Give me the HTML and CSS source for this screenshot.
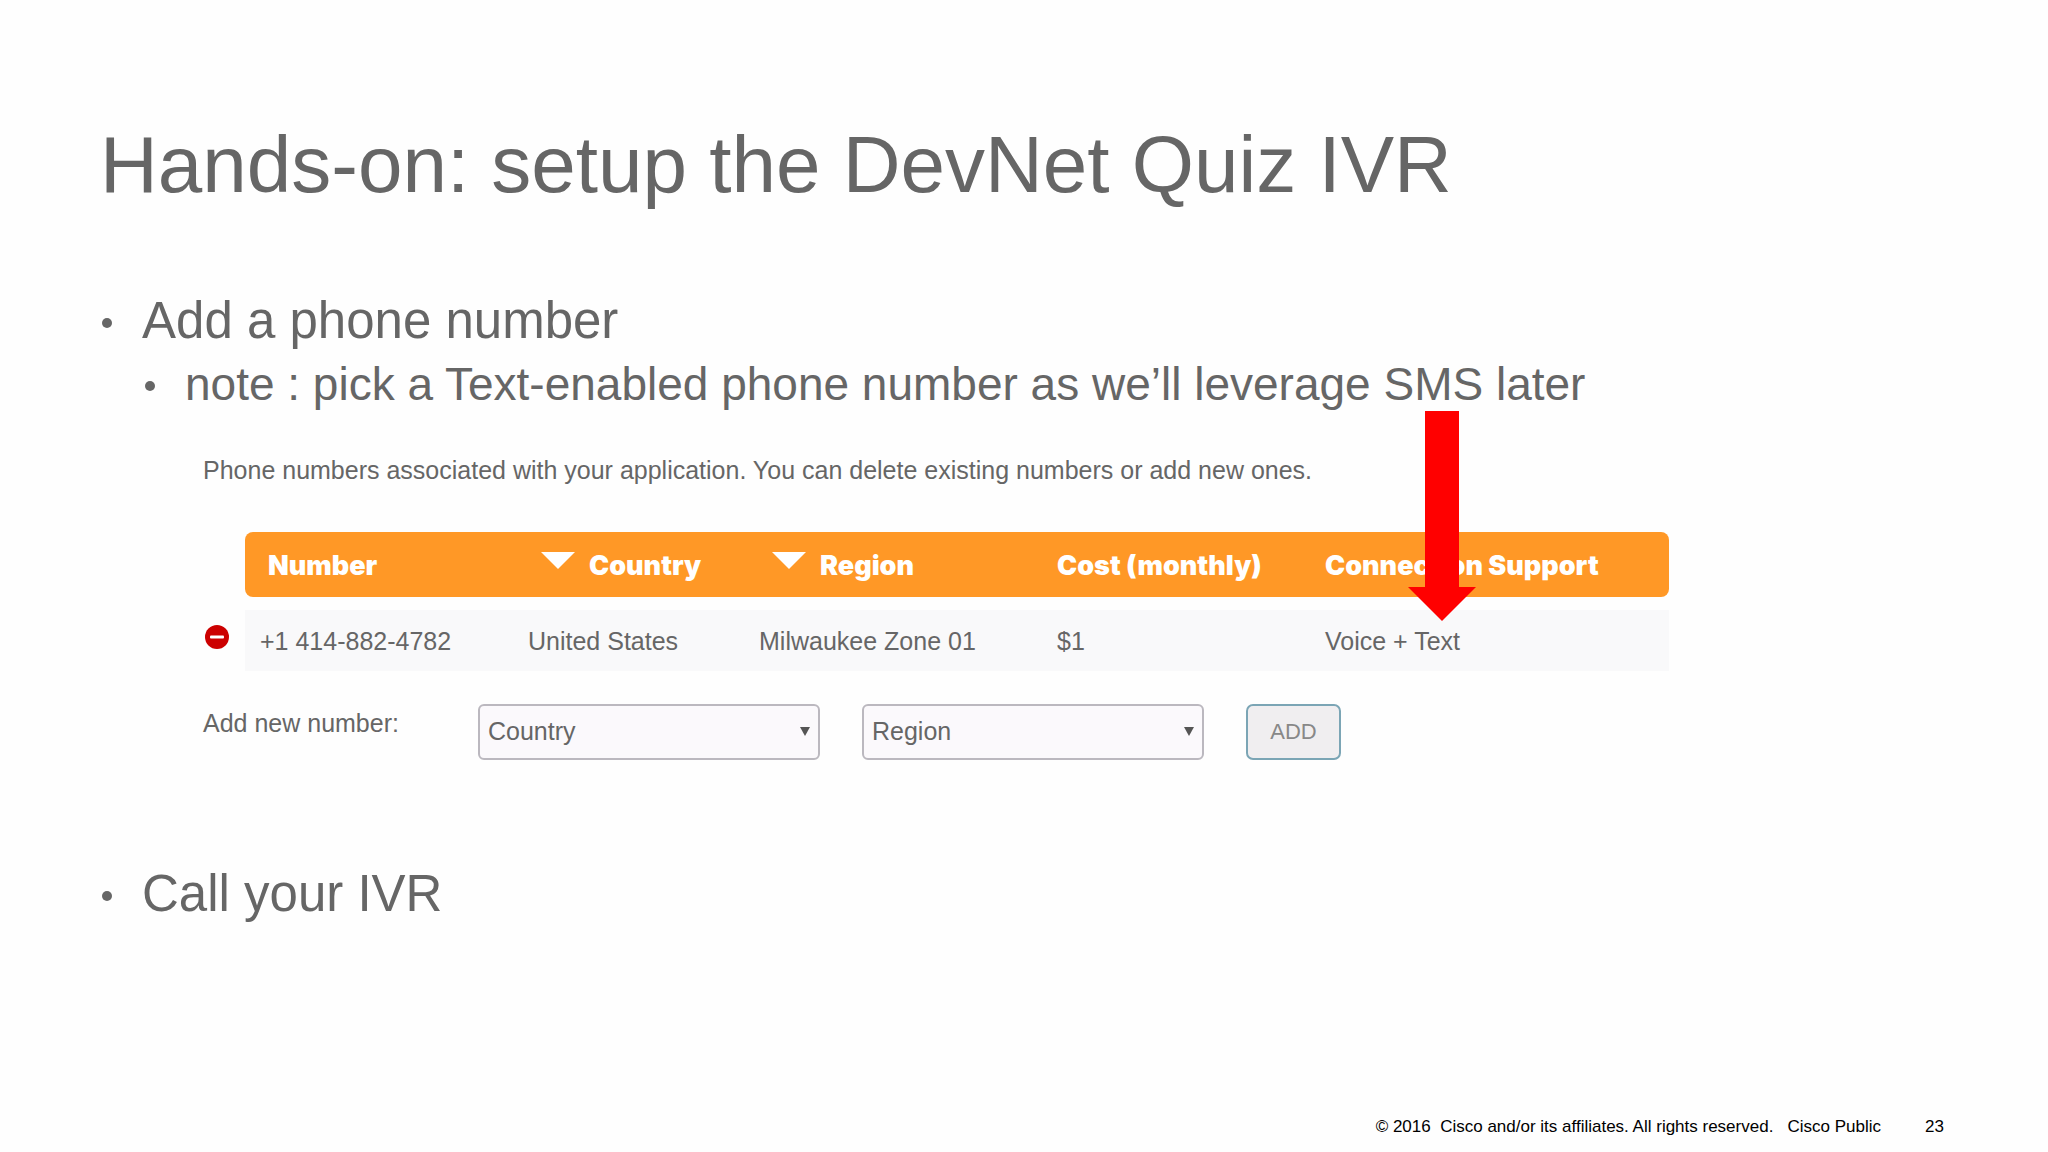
FILE: index.html
```
<!DOCTYPE html>
<html lang="en">
    <head>
        <meta charset="UTF-8">
        <title>Hands-on: setup the DevNet Quiz IVR</title>
        <link rel="stylesheet" href="styles.css">
    </head>
    <body>
    <div class="slide">
        <h1>Hands-on: setup the DevNet Quiz IVR</h1>
        <ul class="steps">
            <li>
                <p class="step">Add a phone number</p>
                <ul class="notes">
                    <li><p class="note">note : pick a Text-enabled phone number as we’ll leverage SMS later</p></li>
                </ul>
                <div class="app">
                    <p>Phone numbers associated with your application. You can delete existing numbers or add new ones.</p>
                    <table class="numbers">
                        <thead>
                            <tr>
                                <td class="del"></td>
                                <th class="number">Number</th>
                                <th class="country sort"><span></span>Country</th>
                                <th class="region sort"><span></span>Region</th>
                                <th class="cost">Cost (monthly)</th>
                                <th class="support">Connection Support
                                    <svg class="pointer" width="68" height="210" viewBox="0 0 68 210">
                                        <path d="M17 0H51V176H68L34 210L0 176H17Z" fill="#f00"/>
                                    </svg>
                                </th>
                            </tr>
                        </thead>
                        <tbody>
                            <tr>
                                <td class="del">
                                    <button class="remove" type="button" aria-label="Delete number">
                                        <svg width="26" height="26" viewBox="0 0 26 26">
                                            <circle cx="14" cy="13" r="12" fill="#c00"/>
                                            <rect x="7" y="11.5" width="14" height="3" rx="1" fill="#fff"/>
                                        </svg>
                                    </button>
                                </td>
                                <td>+1 414-882-4782</td>
                                <td>United States</td>
                                <td>Milwaukee Zone 01</td>
                                <td>$1</td>
                                <td>Voice + Text</td>
                            </tr>
                        </tbody>
                    </table>
                    <form class="add">
                        <label for="country">Add new number:</label>
                        <div class="select">
                            <select id="country"><option>Country</option></select>
                        </div>
                        <div class="select">
                            <select id="region" aria-label="Region"><option>Region</option></select>
                        </div>
                        <button type="button">ADD</button>
                    </form>
                </div>
            </li>
            <li><p class="step">Call your IVR</p></li>
        </ul>
        <footer>
            <span class="copy">© 2016  Cisco and/or its affiliates. All rights reserved.   Cisco Public</span>
            <span>23</span>
        </footer>
    </div>
    </body>
</html>
```

FILE: styles.css
```
*{
    margin:0;
    padding:0;
    box-sizing:border-box;
}
body{
    font-family:"Liberation Sans", Arial, sans-serif;
    color:#666;
    background:#fefefe;
}
ul{
    list-style:none;
}
.slide{
    display:flex;
    flex-direction:column;
    min-height:100vh;
    padding:117px 100px 13px;
}
h1{
    font-size:80px;
    line-height:96px;
    font-weight:normal;
    margin-bottom:76px;
}
.step,.note{
    display:flex;
    align-items:center;
}
.step{
    font-size:51px;
    line-height:64px;
}
.note{
    font-size:46px;
    line-height:62px;
}
.step:before,.note:before{
    content:"";
    flex:none;
    width:10px;
    height:10px;
    margin:4px 30px 0 2px;
    border-radius:50%;
    background:#666;
}
.notes{
    padding-left:43px;
}
/* phone numbers panel */
.app{
    max-width:1466px;
    margin:39px 0 102px 103px;
    font-size:25px;
    line-height:32px;
}
.numbers{
    width:100%;
    margin-top:33px;
    table-layout:fixed;
    border-collapse:separate;
    border-spacing:0 13px;
}
.numbers th,.numbers td{
    padding-left:15px;
    text-align:left;
}
.numbers th{
    position:relative;
    height:65px;
    padding-top:2px;
    font-family:Inter, "Liberation Sans", sans-serif;
    font-size:27px;
    font-weight:900;
    color:#fff;
    background:#ff9826;
    white-space:nowrap;
}
.numbers td{
    background:#f9f9fa;
}
.numbers tbody td{
    height:61px;
}
.numbers .del{
    width:42px;
    padding-left:0;
    background:none;
}
.numbers .number{
    width:268px;
    padding-left:23px;
    border-radius:8px 0 0 8px;
}
.numbers .country{
    width:231px;
}
.numbers .region{
    width:298px;
}
.numbers .cost{
    width:268px;
}
.numbers .support{
    border-radius:0 8px 8px 0;
}
.numbers .sort{
    padding-left:28px;
}
.sort span{
    display:inline-block;
    margin-right:14px;
    border:17px solid transparent;
    border-top-color:#fff;
    border-bottom:0;
    vertical-align:6px;
}
/* arrow drawn over the table */
.pointer{
    position:absolute;
    top:-121px;
    left:98px;
}
.remove{
    display:block;
    height:26px;
    margin-bottom:8px;
    border:0;
    background:none;
}
.add{
    display:flex;
    align-items:flex-start;
    margin-top:20px;
}
.add label{
    width:275px;
    padding-top:3px;
}
.select{
    position:relative;
    width:342px;
    margin-right:42px;
}
.select:after{
    content:"";
    position:absolute;
    top:23px;
    right:10px;
    border:5px solid transparent;
    border-top:9px solid #555;
    border-bottom:0;
    pointer-events:none;
}
.select select{
    width:100%;
    height:56px;
    padding:0 8px 2px;
    border:2px solid #bbb8bf;
    border-radius:6px;
    appearance:none;
    background:#fbf9fc;
    color:#666;
    font:25px "Liberation Sans", Arial, sans-serif;
}
.add button{
    width:95px;
    height:56px;
    border:2px solid #7ba5b5;
    border-radius:7px;
    background:#f0eef0;
    color:#888;
    font:22px "Liberation Sans", Arial, sans-serif;
}
footer{
    display:flex;
    justify-content:flex-end;
    gap:44px;
    margin-top:auto;
    padding-right:4px;
    font-size:17px;
    line-height:24px;
    color:#000;
}
.copy{
    white-space:pre;
}
```
